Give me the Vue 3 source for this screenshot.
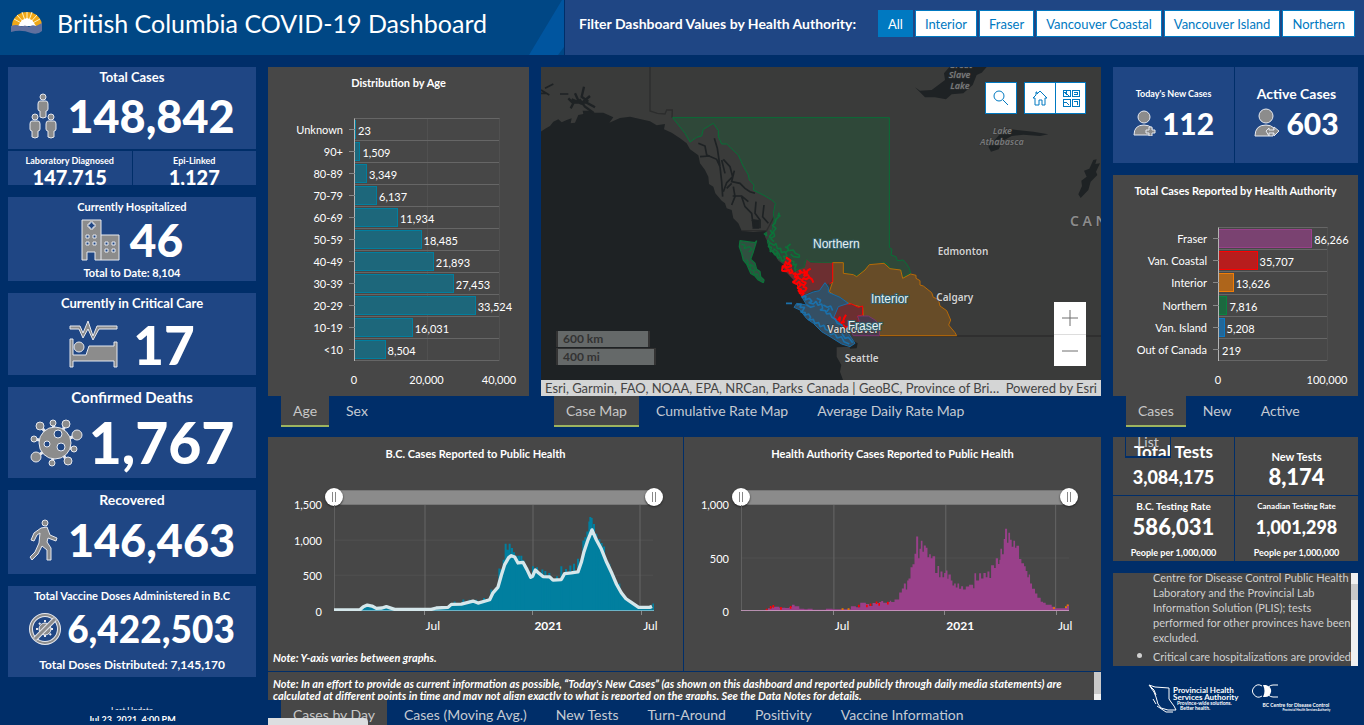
<script setup>
import { ref } from 'vue'

const authorities = ['All', 'Interior', 'Fraser', 'Vancouver Coastal', 'Vancouver Island', 'Northern']
const authority = ref('All')

const ages = [
  ['Unknown', '23'], ['90+', '1,509'], ['80-89', '3,349'], ['70-79', '6,137'],
  ['60-69', '11,934'], ['50-59', '18,485'], ['40-49', '21,893'], ['30-39', '27,453'],
  ['20-29', '33,524'], ['10-19', '16,031'], ['<10', '8,504']
]
const regions = [
  ['Fraser', '86,266', 'fraser'], ['Van. Coastal', '35,707', 'coastal'], ['Interior', '13,626', 'interior'],
  ['Northern', '7,816', 'northern'], ['Van. Island', '5,208', 'island'], ['Out of Canada', '219', 'out']
]
const share = (text, max) => (Number(text.replace(',', '')) / max) * 100 + '%'

const averageLine = '218,542 295,542 306,532 318,527 332,530 345,537 362,536 375,532 400,540 510,540 525,536 560,534 570,525 600,524 635,515 650,521 685,511 695,490 710,473 720,437 730,405 742,384 750,378 760,382 770,400 785,398 797,420 808,443 814,440 822,421 832,430 845,441 865,442 875,452 900,450 910,432 930,430 950,427 960,398 968,366 980,330 992,300 1005,330 1020,358 1036,398 1052,432 1066,465 1080,490 1094,508 1110,519 1132,534 1165,534 1172,531'
const spikes = [
  [580, 516], [606, 510], [625, 511], [645, 511], [668, 506], [690, 480], [714, 417], [720, 420], [727, 390], [733, 342],
  [739, 360], [745, 342], [752, 355], [758, 368], [766, 378], [773, 378], [780, 378], [786, 392], [815, 410], [827, 413],
  [843, 420], [852, 424], [864, 430], [887, 440], [900, 410], [914, 418], [927, 408], [938, 402], [950, 387], [966, 332],
  [972, 322], [978, 305], [984, 275], [987, 261], [991, 264], [998, 282], [1005, 312], [1014, 328], [1021, 340], [1028, 350],
  [1044, 402], [1056, 436], [1074, 462], [1176, 522]
]

const fraserSteps = [
  [258, 541], [266, 537], [278, 532], [286, 532], [300, 535], [318, 536], [330, 533], [338, 526], [346, 531], [360, 538],
  [375, 540], [385, 538], [400, 541], [440, 538], [460, 540], [515, 531], [530, 534], [543, 520], [560, 524], [570, 530],
  [580, 521], [600, 518], [606, 515], [612, 520], [624, 518], [632, 514], [636, 518], [646, 510], [660, 489], [668, 477],
  [674, 462], [680, 480], [684, 453], [688, 447], [694, 413], [700, 404], [706, 372], [711, 320], [717, 386], [721, 357],
  [725, 333], [730, 366], [734, 347], [740, 354], [745, 383], [750, 374], [755, 386], [760, 380], [768, 430], [775, 409],
  [780, 443], [784, 426], [790, 443], [795, 430], [800, 423], [805, 448], [808, 435], [815, 453], [820, 468], [825, 462],
  [830, 474], [835, 462], [840, 478], [846, 470], [852, 480], [860, 471], [870, 466], [882, 476], [886, 431], [891, 453],
  [900, 431], [906, 447], [913, 430], [920, 443], [925, 426], [931, 445], [936, 407], [945, 415], [950, 386], [957, 403],
  [961, 390], [964, 357], [969, 374], [974, 328], [978, 297], [984, 339], [988, 309], [993, 330], [998, 351], [1003, 333],
  [1008, 354], [1012, 348], [1020, 388], [1027, 401], [1035, 410], [1040, 424], [1045, 443], [1049, 435], [1053, 462],
  [1059, 478], [1068, 492], [1075, 505], [1085, 517], [1092, 520], [1100, 526], [1118, 532], [1128, 537], [1158, 534],
  [1164, 526]
]
const fraserPath = 'M258 545' + fraserSteps.map(([x, y]) => `H${x}V${y}`).join('') + 'H1170V545Z'
const coastalMarks = [[262, 538], [274, 530], [282, 527], [305, 533], [334, 530], [539, 526], [563, 526], [574, 522], [592, 516], [600, 521], [626, 517]]
const interiorMarks = [[490, 537], [508, 537], [1125, 534], [1161, 531], [1166, 525]]

const dailyTabs = ['Cases by Day', 'Cases (Moving Avg.)', 'New Tests', 'Turn-Around', 'Positivity', 'Vaccine Information']
</script>

<template>
  <div class="dashboard">
    <header class="top">
      <div class="brand">
        <svg class="sun" viewBox="0 0 32 24" aria-hidden="true">
          <path d="M1 15A15 14 0 0 1 31 15Z" fill="#f0a818" />
          <g stroke="#fff3c4" stroke-width="1"><path d="M16 15L3 8M16 15L6 4M16 15L11 1M16 15V1M16 15L21 1M16 15L26 4M16 15L29 8" /></g>
          <path d="M7 15L11 9L16 7L21 9L25 15Z" fill="#fff" />
          <path d="M0 15Q5 13 9 15Q12 16 14 14L18 16Q21 13 25 15L31 12V20Q27 24 20 22Q10 18 0 21Z" fill="#60709e" />
          <path d="M10 14L13 12L16 14L18 12L21 14L17 15Z" fill="#fff" />
        </svg>
        <h1>British Columbia COVID-19 Dashboard</h1>
        <svg class="wedge" viewBox="0 0 35 55" preserveAspectRatio="none" aria-hidden="true">
          <path d="M33 0H35V47L29 55H0Z" fill="#00559f" />
        </svg>
      </div>
      <div class="filter">
        <span id="filter-label" class="filter-label">Filter Dashboard Values by Health Authority:</span>
        <div class="options" role="group" aria-labelledby="filter-label">
          <button v-for="name in authorities" :key="name" type="button" :class="{ on: authority === name }" :aria-pressed="authority === name" @click="authority = name">{{ name }}</button>
        </div>
      </div>
    </header>

    <main class="board">
      <section class="left">
        <div class="total">
          <article class="card">
            <h2 class="t13">Total Cases</h2>
            <div class="figure raised">
              <svg width="28" height="46" viewBox="0 0 28 46" class="icon" aria-hidden="true">
                <g id="person"><circle cx="14" cy="4" r="3" /><path d="M11 8H17Q19 8 19 11V16Q19 18 17 18V24Q14 26 11 24V18Q9 18 9 16V11Q9 8 11 8Z" /></g>
                <use href="#person" x="-8" y="20" /><use href="#person" x="8" y="20" />
              </svg>
              <strong class="n45">148,842</strong>
            </div>
          </article>
          <article class="card sub"><h3 class="t9">Laboratory Diagnosed</h3><strong class="n20">147,715</strong></article>
          <article class="card sub"><h3 class="t9">Epi-Linked</h3><strong class="n20">1,127</strong></article>
        </div>

        <article class="card">
          <h2 class="t11">Currently Hospitalized</h2>
          <div class="figure">
            <svg width="39" height="42" viewBox="0 0 39 42" class="icon" aria-hidden="true">
              <path d="M1 1H20V16H38V41H14V33H6V41H1Z" />
              <path d="M20 16V41" />
              <path d="M9 3H12V5H14V8H12V10H9V8H7V5H9Z" fill="#1f4684" />
              <g fill="#1f4684"><path d="M5 16h3v3h-3zM12 16h3v3h-3zM5 23h3v3h-3zM12 23h3v3h-3zM24 23h3v3h-3zM31 23h3v3h-3zM24 30h3v3h-3zM31 30h3v3h-3z" /></g>
            </svg>
            <strong class="n46">46</strong>
          </div>
          <p class="foot t11">Total to Date: 8,104</p>
        </article>

        <article class="card">
          <h2 class="t13">Currently in Critical Care</h2>
          <div class="figure wide">
            <svg width="50" height="48" viewBox="0 0 50 48" class="icon" aria-hidden="true">
              <path d="M1 6H11L14 13L19 1L24 16L28 6H48V9H30L24 20L19 9L14 18L10 9H1Z" />
              <path d="M1 19H4V35H17L20 26H45V22H48V47H45V41H4V47H1Z" /><circle cx="10" cy="27" r="5" />
            </svg>
            <strong class="n53">17</strong>
          </div>
        </article>

        <article class="card">
          <h2 class="t15">Confirmed Deaths</h2>
          <div class="figure tight">
            <svg width="53" height="48" viewBox="0 0 53 48" class="icon" aria-hidden="true">
              <path d="M26 24L10 7M26 24L23 4M26 24L36 5M26 24L48 16M26 24L4 20M26 24L6 38M26 24L22 44M26 24L37 42M26 24L43 30" class="arm" />
              <circle cx="25" cy="24" r="16" /><circle cx="10" cy="7" r="4" /><circle cx="23" cy="4" r="3" /><circle cx="36" cy="5" r="4" />
              <circle cx="47" cy="16" r="5" /><circle cx="4" cy="20" r="3" /><circle cx="6" cy="38" r="5" /><circle cx="22" cy="44" r="3" /><circle cx="38" cy="42" r="4" /><circle cx="44" cy="30" r="3" />
              <g fill="#1f4684"><circle cx="28" cy="15" r="4" /><circle cx="17" cy="25" r="3" /><circle cx="31" cy="28" r="4" /></g>
            </svg>
            <strong class="n57">1,767</strong>
          </div>
        </article>

        <article class="card">
          <h2 class="t14">Recovered</h2>
          <div class="figure raised">
            <svg width="29" height="42" viewBox="0 0 29 42" class="icon" aria-hidden="true">
              <circle cx="16" cy="4" r="3" />
              <path d="M12 9L18 8L21 16L28 19L27 22L19 19L18 23L22 29V41H18V31L13 27L9 35L3 41L1 38L6 33L10 24L11 14L8 16L5 22L2 21L5 14Z" />
            </svg>
            <strong class="n45">146,463</strong>
          </div>
        </article>

        <article class="card">
          <h2 class="t11">Total Vaccine Doses Administered in B.C</h2>
          <div class="figure tight raised">
            <svg width="32" height="32" viewBox="0 0 32 32" class="icon" aria-hidden="true">
              <circle cx="16" cy="16" r="14" fill="none" stroke-width="4" /><circle cx="16" cy="16" r="14" fill="none" stroke="#8c8c8c" stroke-width="2" />
              <path d="M16 7V25M7 16H25M10 10L22 22M22 10L10 22" stroke-width="2" stroke-dasharray="2 1" />
              <circle cx="16" cy="16" r="6" /><path d="M6 26L26 6" stroke-width="5" /><path d="M6 26L26 6" stroke="#8c8c8c" stroke-width="3" />
            </svg>
            <strong class="n37">6,422,503</strong>
          </div>
          <p class="foot t12">Total Doses Distributed: 7,145,170</p>
        </article>

        <div class="updated"><span>Last Update</span><b>Jul 23, 2021, 4:00 PM</b></div>
      </section>

      <section class="age">
        <article class="panel">
          <h2>Distribution by Age</h2>
          <div class="bars age-bars">
            <div v-for="[label, count] in ages" :key="label" class="bar-row">
              <span class="bar-label">{{ label }}</span>
              <span class="bar" :style="{ width: share(count, 40000) }"></span>
              <span class="bar-count">{{ count }}</span>
            </div>
            <div class="scale"><span>0</span><span>20,000</span><span>40,000</span></div>
          </div>
        </article>
        <nav class="tabs"><button class="on" type="button">Age</button><button type="button">Sex</button></nav>
      </section>

      <section class="map">
        <article class="panel">
          <svg class="canvas" viewBox="3 21 1680 939" preserveAspectRatio="xMidYMid slice" role="img" aria-label="Case map">
            <rect x="3" y="21" width="1680" height="939" fill="#3a3b3a" />
            <path fill="#1e2224" d="M0 216L18 205L30 198L40 185L55 178L65 187L80 180L95 175L92 190L105 188L115 165L130 162L128 152L150 152L165 158L190 158L220 172L208 188L240 174L270 170L300 177L330 184L350 196L375 192L372 208L395 218L420 235L440 250L450 268L475 286L480 310L495 330L505 350L507 372L520 380L526 400L545 422L555 430L560 445L575 450L580 475L595 490L605 512L640 516L680 512L675 530L690 560L715 602L740 620L760 640L770 670L785 710L885 800L930 860L890 862L890 890L904 915L900 935L909 960H0Z" />
            <g fill="none" stroke="#1e2224" stroke-width="5">
              <path d="M85 115L100 130L92 145M105 100L118 128L95 118M132 80L125 110L145 125M100 128H140L165 142M118 118L135 140L160 158M150 108L122 132" stroke-width="7" />
              <path d="M3 90L28 105M15 85L40 72M3 100H20M60 102H85" />
              <path d="M475 250L495 258L500 285L530 298L540 320L545 365L548 410M523 235L532 265L540 320M550 298L570 320L578 350L560 368L550 395M545 300L555 340M583 332L575 365L600 370L615 385L630 395L645 400M560 385L575 370M578 408H605L625 425M580 380L585 410L575 435M605 410L615 440L635 460L640 500M648 425L645 460L660 480V505M672 435L668 470L685 490M635 480L650 490M480 290L510 288" />
              <path d="M642 480L655 482V504H640Z" fill="#1e2224" />
            </g>
            <path fill="none" stroke="#2c2d2d" stroke-width="4" d="M330 21V153L352 160L375 162L380 150H397L396 173M605 512H680L705 465M1018 828H1683" />
            <g fill="#1e2224">
              <path d="M1125 82L1140 92L1175 90L1215 60L1212 40L1228 21H1340L1325 38L1310 45L1298 75L1270 100L1235 103L1218 118L1185 112L1155 112Z" />
              <path d="M1345 260L1370 233L1395 205L1430 210L1480 215L1525 223L1500 228L1450 224L1415 228L1388 243L1376 268L1353 275Z" />
              <path d="M1660 300L1670 298L1666 312L1680 310L1668 335L1672 345L1652 365L1645 390L1622 414L1615 403L1626 378L1624 362L1640 350L1632 332L1648 326Z" />
              <path d="M925 835L953 850L950 865L930 866Z" />
            </g>
            <path fill="#2f4839" stroke="#086f36" stroke-width="3" d="M398 173H1048V562L1056 568L1053 585L1068 590L1072 602L1090 600L1100 612L1108 625L1112 640L1095 648L1088 655L1082 630L1050 626L1042 612L1032 608L1010 616L988 614L975 630L950 648L940 644L910 640V608L878 607L845 608L810 605L800 598L795 610V622L770 630L758 605L745 600L735 608L720 600L705 585L690 570L682 545L695 518L703 480L700 460L706 430L695 420L675 408L640 390L642 375L628 360L625 345L608 315L595 285L570 262L560 252H545L535 230V212L520 190L490 208L485 228L470 232L450 246L435 220Z" />
            <g stroke="#0d7139" stroke-width="4" fill="none" stroke-linejoin="bevel">
              <path stroke-width="5" d="M716 458L718 468L708 478L705 490L697 496L708 505L700 515L704 528L692 536L702 545M712 466L722 468M690 510L697 520L688 530L697 535M682 540L690 548L685 560L695 562L690 575L700 572L704 585L710 578L714 595L722 590L726 604L735 598L730 588L740 590M692 550L702 556L708 550L712 566L722 565L724 578L735 575L742 590M700 566L712 574L720 588M735 580L745 570L742 560L752 552M745 572L760 570L766 580L778 585V592L760 590L752 582M735 560L746 566M672 520L680 528L678 516M750 600L762 605L758 615L770 612L764 625L768 638" />
              <path d="M600 542L645 548L650 542L640 575L632 598L645 610L650 628L660 635L662 650L672 660L670 668L655 660L645 648L632 640L620 612L610 600L605 580L598 560Z" fill="#305040" /><path d="M604 552L615 556L612 566L628 560L636 568L626 576M618 598L625 606L622 614L634 618L630 628L640 632L642 644L652 642L658 656L665 660M630 612L640 618L646 634" />
            </g>
            <path fill="#674c28" stroke="#b96a06" stroke-width="3" d="M878 608H910V640L940 644L950 650L975 630L988 614L1032 610L1050 626L1082 630L1088 655L1112 642L1128 646V655L1140 662V675L1150 678L1175 698L1180 712L1195 718L1200 738L1220 752L1232 780L1226 795L1245 818L1250 827H1018V805L1008 785L970 768L968 742L940 735L905 722L868 695L878 665Z" />
            <path fill="#6c2f31" d="M728 625L738 592L753 602L758 640L775 630L795 622L800 598L812 608H878V665L862 672L850 690H820L785 710L770 670Z" />
            <path fill="none" stroke="#ff0000" stroke-width="3" d="M878 608V665L868 672M785 710L770 670" />
            <path fill="#6c2f31" stroke="#ff0000" stroke-width="3" d="M890 742L903 732H935L955 742L968 738V765L953 768L960 790L940 800H910L880 775Z" />
            <path fill="none" stroke="#ff0000" stroke-width="6" stroke-linejoin="bevel" d="M738 592L752 602L745 610L755 618L742 622L728 618L726 632L738 634L746 628L750 640L758 636L752 626M735 604L745 615M733 610L740 628M758 642L768 640L764 652L776 650L766 662L758 666L770 672L778 664L782 676L772 684L784 688L778 700L792 698L786 710M770 645L782 640L778 630L786 638L796 636L792 648L804 645L808 652L798 658L790 654L786 664L798 668L792 676L782 672M800 645L802 632L812 626M808 652L816 658L820 668M798 638L790 628M775 654L785 660M788 680L800 684L796 692L784 694M774 690L784 702M880 772L890 780L886 790L898 788L900 798L912 796L916 804L926 800M895 780L900 770L898 785M908 790L912 775L918 764M902 792L908 784L914 788M884 782L892 795" />
            <path fill="#493b4c" stroke="#7b346e" stroke-width="3" d="M953 768H985L1008 782L1018 802V827H940L930 805L948 800L960 790Z" />
            <path fill="#344f64" stroke="#176ca8" stroke-width="3" d="M785 710L820 696L838 692L855 668L865 682V697L900 712L925 730L895 740L880 775L900 790L925 820L945 850L930 860L905 852L870 830L845 815L820 790L800 776L780 750L762 742L770 730L800 735Z" />
            <path fill="none" stroke="#1b70aa" stroke-width="5" stroke-linejoin="bevel" d="M785 712L798 708L795 720L808 715L816 724L806 728L820 732L828 724L834 736L845 732L848 745L840 750L856 752L860 762L870 760L876 772L886 778L892 790L905 795L912 808L922 820M830 715L842 720L838 730M770 735L784 732L780 742L794 742L788 752L782 756L796 758L794 766L806 762L812 772L806 780L820 778L824 790L836 788L840 800L852 796L856 808L866 812L872 824L884 820L892 834L904 830L912 845L928 852M850 735L862 742L872 738L878 752M860 755L868 745M738 730H756M800 735L812 742L824 738M905 820L915 835L925 832L938 848" />
            <g class="city">
              <text x="819" y="563" class="zone">Northern</text><text x="993" y="729" class="zone">Interior</text>
              <text x="1193" y="585">Edmonton</text><text x="1189" y="724">Calgary</text><text x="862" y="818">Vancouver</text><text x="914" y="905">Seattle</text>
              <text x="923" y="809" class="zone">Fraser</text>
              <g class="lake"><text x="1228" y="24">Great</text><text x="1226" y="55">Slave</text><text x="1231" y="87">Lake</text><text x="1358" y="223">Lake</text><text x="1320" y="255">Athabasca</text></g>
              <text x="1590" y="498" class="country">C A N</text>
            </g>
          </svg>
          <div class="rulers"><span>600 km</span><span>400 mi</span></div>
          <div class="map-tools">
            <button type="button" aria-label="Search"><svg width="16" height="16" viewBox="0 0 16 16"><circle cx="6" cy="6" r="5" /><path d="M10 10L15 15" /></svg></button>
            <div class="pair">
              <button type="button" aria-label="Default view"><svg width="16" height="16" viewBox="0 0 16 16"><path d="M1 8L4 5V2H5V4L8 1L15 8H13V15H10V10H7V15H3V8Z" /></svg></button>
              <button type="button" aria-label="Basemaps"><svg width="18" height="18" viewBox="0 0 18 18" shape-rendering="crispEdges"><path d="M1 1H8V7H1ZM10 1H17V7H10ZM1 10H8V17H1ZM10 10H17V17H10ZM1 2L7 7M5 2L3 5M12 3H15V5H12M1 13H4L7 16M12 12H15V16" /></svg></button>
            </div>
          </div>
          <div class="zoom">
            <button type="button" aria-label="Zoom in"><svg width="16" height="16" viewBox="0 0 16 16"><path d="M8 0V16M0 8H16" /></svg></button>
            <button type="button" aria-label="Zoom out"><svg width="16" height="16" viewBox="0 0 16 16"><path d="M0 8H16" /></svg></button>
          </div>
          <div class="credits"><span>Esri, Garmin, FAO, NOAA, EPA, NRCan, Parks Canada | GeoBC, Province of British Columbia</span><span class="powered">Powered by Esri</span></div>
        </article>
        <nav class="tabs"><button class="on" type="button">Case Map</button><button type="button">Cumulative Rate Map</button><button type="button">Average Daily Rate Map</button></nav>
      </section>

      <section class="daily">
        <div class="daily-charts">
          <article class="panel trend">
            <h2>B.C. Cases Reported to Public Health</h2>
            <div class="time bc">
              <div class="range"><input type="range" aria-label="Start date" value="0"><input type="range" aria-label="End date" value="100"></div>
              <div class="plot">
                <svg viewBox="218 225 960 320" preserveAspectRatio="none" aria-hidden="true">
                  <path d="M218 331H1175M218 437H1175" stroke="#505050" stroke-width="3" /><path d="M219 225V545M491 225V545M815 225V545M1136 225V545" stroke="#666" stroke-width="3" />
                  <polygon :points="averageLine + ' 1172,545 218,545'" fill="#017f9f" />
                  <path :d="spikes.map(([x, y]) => `M${x} 545V${y}`).join('')" stroke="#017f9f" stroke-width="6" />
                  <path d="M218 544H1178" stroke="#7fbfcf" stroke-width="3" />
                  <polyline :points="averageLine" fill="none" stroke="#d5e7eb" stroke-width="10" stroke-linejoin="round" />
                </svg>
                <div class="ylabels"><span>1,500</span><span>1,000</span><span>500</span><span>0</span></div>
                <div class="xlabels"><span class="x1">Jul</span><b class="x2">2021</b><span class="x3">Jul</span></div>
              </div>
            </div>
            <p class="axis-note">Note: Y-axis varies between graphs.</p>
          </article>
          <article class="panel trend">
            <h2>Health Authority Cases Reported to Public Health</h2>
            <div class="time ha">
              <div class="range"><input type="range" aria-label="Start date" value="0"><input type="range" aria-label="End date" value="100"></div>
              <div class="plot">
                <svg viewBox="185 225 985 320" preserveAspectRatio="none" aria-hidden="true">
                  <path d="M185 385H1170" stroke="#505050" stroke-width="3" /><path d="M186 225V545M464 225V545M800 225V545M1130 225V545" stroke="#666" stroke-width="3" />
                  <path :d="fraserPath" fill="#99408a" />
                  <path :d="coastalMarks.map(([x, y]) => `M${x} ${y}v8`).join('')" stroke="#ff0000" stroke-width="5" />
                  <path :d="interiorMarks.map(([x, y]) => `M${x} ${y}v5`).join('')" stroke="#e67800" stroke-width="6" />
                  <path d="M185 544H1170" stroke="#cc9fc4" stroke-width="3" />
                </svg>
                <div class="ylabels"><span>1,000</span><span>500</span><span>0</span></div>
                <div class="xlabels"><span class="x1">Jul</span><b class="x2">2021</b><span class="x3">Jul</span></div>
              </div>
            </div>
          </article>
        </div>
        <div class="panel statement">
          <p>Note: In an effort to provide as current information as possible, “Today's New Cases” (as shown on this dashboard and reported publicly through daily media statements) are calculated at different points in time and may not align exactly to what is reported on the graphs. See the Data Notes for details.</p>
          <i class="scroll"></i>
        </div>
        <nav class="tabs"><button v-for="(tab, i) in dailyTabs" :key="tab" type="button" :class="{ on: i === 0 }">{{ tab }}</button></nav>
        <span class="status"></span>
      </section>

      <section class="right">
        <div class="pair-cards">
          <article class="card"><h3 class="t9">Today's New Cases</h3>
            <div class="figure tight"><svg width="23" height="26" viewBox="0 0 23 26" class="icon" aria-hidden="true"><circle cx="11" cy="7" r="6" /><path d="M1 25Q1 15 11 15Q16 15 19 18L18 25Z" /><path d="M16 17H19V20H22V23H19V26H16V23H13V20H16Z" /></svg><strong class="n30">112</strong></div>
          </article>
          <article class="card"><h3 class="t14">Active Cases</h3>
            <div class="figure tight"><svg width="26" height="29" viewBox="0 0 26 29" class="icon" aria-hidden="true"><circle cx="12" cy="8" r="7" /><path d="M1 28Q1 17 12 17Q17 17 20 20L19 28Z" /><path d="M15 20V22H20V19L25 23L20 28V25H15V28L12 23Z" /></svg><strong class="n30">603</strong></div>
          </article>
        </div>
        <article class="panel">
          <h2>Total Cases Reported by Health Authority</h2>
          <div class="bars region-bars">
            <div v-for="[label, count, key] in regions" :key="label" class="bar-row">
              <span class="bar-label">{{ label }}</span>
              <span class="bar" :class="key" :style="{ width: share(count, 100000) }"></span>
              <span class="bar-count">{{ count }}</span>
            </div>
            <div class="scale"><span>0</span><span>100,000</span></div>
          </div>
        </article>
        <nav class="tabs"><button class="on" type="button">Cases</button><button type="button">New</button><button type="button">Active</button><button class="wrapped" type="button">List</button></nav>
        <div class="tests">
          <article class="panel"><h3 class="t17">Total Tests</h3><strong class="n18">3,084,175</strong></article>
          <article class="panel"><h3 class="t11">New Tests</h3><strong class="n22">8,174</strong></article>
          <article class="panel"><h3 class="t10">B.C. Testing Rate</h3><strong class="n22">586,031</strong><small>People per 1,000,000</small></article>
          <article class="panel"><h3 class="t8">Canadian Testing Rate</h3><strong class="n18">1,001,298</strong><small>People per 1,000,000</small></article>
        </div>
        <div class="panel notes">
          <ul>
            <li>Centre for Disease Control Public Health Laboratory and the Provincial Lab Information Solution (PLIS); tests performed for other provinces have been excluded.</li>
            <li>Critical care hospitalizations are provided</li>
          </ul>
          <i class="scroll"></i>
        </div>
        <footer class="logos">
          <div class="phsa">
            <svg width="29" height="29" viewBox="0 0 29 29" aria-hidden="true"><path d="M1 1L7 3L21 4V15L23 18L26 22L28 26L20 26L13 24L10 20L8 13L6 8ZM5 15L8 20M9 22L18 28L25 28M2 2L6 6L8 11" fill="none" stroke="#fff" stroke-width="1" /></svg>
            <p><b>Provincial Health<br>Services Authority</b><span>Province-wide solutions.</span><span class="second">Better health.</span></p>
          </div>
          <div class="cdc">
            <svg width="27" height="14" viewBox="0 0 27 14" aria-hidden="true"><path d="M11 2A6 6 0 1 0 11 12M27 1H22A6 6 0 0 0 22 13H27" fill="none" stroke="#fff" stroke-width="1" /><path d="M12 1H15Q21 3 20 8Q19 13 14 13H12Q15 7 12 1Z" fill="#fff" /></svg>
            <b>BC Centre for Disease Control</b><span>Provincial Health Services Authority</span>
          </div>
        </footer>
      </section>
    </main>
  </div>
</template>

<style>
body { margin: 0; background: #002e69; }
</style>

<style scoped>
* { box-sizing: border-box; }
.dashboard { height: 100vh; min-height: 640px; display: flex; flex-direction: column; overflow: hidden; background: #002e69; color: #fff; font-family: Lato, "Open Sans", sans-serif; }
h1, h2, h3, p, ul { margin: 0; padding: 0; }
button { font-family: inherit; cursor: pointer; }
.top { flex: none; height: 55px; display: grid; grid-template-columns: minmax(0, 565fr) minmax(0, 799fr); }
.brand { position: relative; display: flex; align-items: center; gap: 14px; padding: 0 0 10px 11px; background: #004785; border-right: 1px solid #002e69; }
.sun { width: 32px; height: 24px; }
h1 { font-size: 25px; line-height: 32px; font-weight: 400; white-space: nowrap; }
.wedge { position: absolute; right: 0; top: 0; width: 35px; height: 100%; }
.filter { display: flex; align-items: flex-start; justify-content: space-between; padding: 10px 9px 0 14px; background: #1f4684; white-space: nowrap; }
.filter-label { font-size: 14px; line-height: 27px; font-weight: 700; }
.options { display: flex; gap: 2px; }
.options button { height: 27px; padding: 0 9px; font-size: 13px; color: #0079c1; background: #fff; border: 1px solid #0079c1; }
.options .on { color: #fff; background: #0079c1; }

.board { flex: 1; min-height: 0; display: grid; grid-template-columns: minmax(0, 248fr) minmax(0, 261fr) minmax(0, 560fr) minmax(0, 245fr); grid-template-rows: minmax(0, 360fr) minmax(0, 288fr); gap: 10px 12px; padding: 12px 6px 0 8px; }
.card { background: #1f4684; display: flex; flex-direction: column; align-items: center; overflow: hidden; min-width: 0; }
.panel { background: #474747; position: relative; min-width: 0; }
.left { grid-row: 1 / 3; display: grid; gap: 12px; grid-template-rows: minmax(0, 118fr) minmax(0, 84fr) minmax(0, 82fr) minmax(0, 91fr) minmax(0, 84fr) minmax(0, 91fr) minmax(0, 36fr); min-height: 0; }
.total { display: grid; gap: 2px 1px; grid-template-columns: 1fr 1fr; grid-template-rows: minmax(0, 82fr) minmax(0, 34fr); }
.total .card:first-child { grid-column: 1 / 3; }
.card h2 { line-height: 20px; font-weight: 700; white-space: nowrap; }
h3 { font-weight: 700; white-space: nowrap; }
.sub { padding-top: 3px; }
.sub h3 { line-height: 13px; }
.figure { flex: 1; display: flex; align-items: center; justify-content: center; gap: 10px; }
.figure.tight { gap: 6px; }
.figure.wide { gap: 14px; }
.figure.raised { padding-bottom: 4px; }
strong { line-height: 1; font-weight: 900; }
.foot { line-height: 20px; padding-bottom: 2px; font-weight: 700; flex: none; }
.icon { fill: #8c8c8c; stroke: #e6e9f0; stroke-width: 1; flex: none; }
.arm { stroke-width: 3; }
.t8 { font-size: 8px; } .t9 { font-size: 9px; } .t10 { font-size: 10px; } .t11 { font-size: 11px; } .t12 { font-size: 12px; }
.t13 { font-size: 13px; } .t14 { font-size: 14px; } .t15 { font-size: 15px; } .t17 { font-size: 17px; }
.n18 { font-size: 18px; } .n20 { font-size: 20px; } .n22 { font-size: 22px; } .n30 { font-size: 30px; }
.n37 { font-size: 37px; } .n45 { font-size: 45px; } .n46 { font-size: 46px; } .n53 { font-size: 53px; } .n57 { font-size: 57px; }
.updated { display: flex; flex-direction: column; align-items: center; padding-top: 17px; gap: 6px; }
.updated span, .updated b { display: block; overflow: hidden; font-size: 8px; line-height: 8px; height: 4px; }
.updated b { font-size: 9px; height: 5px; }

.age, .map { display: grid; grid-template-rows: minmax(0, 1fr) 31px; min-height: 0; }
.age .panel, .right > .panel, .trend { display: flex; flex-direction: column; }
.panel h2 { font-size: 11px; line-height: 32px; font-weight: 700; text-align: center; white-space: nowrap; }
.bars { flex: 1; display: flex; flex-direction: column; position: relative; margin: 19px 29px 35px 86px; border-left: 1px solid #b5b5b5; border-top: 1px solid #666; background: linear-gradient(#505050, #505050) 50% 0 / 1px 100% no-repeat; border-right: 1px solid #505050; font-size: 11px; }
.region-bars { margin: 20px 30px 35px 105px; background: none; }
.bar-row { flex: 1; position: relative; display: flex; align-items: center; border-bottom: 1px solid #666; white-space: nowrap; }
.bar-row::before { content: ""; position: absolute; left: -6px; width: 6px; height: 1px; background: #888; }
.bar-label { position: absolute; right: 100%; margin-right: 12px; }
.bar { flex: none; height: 19px; background: #1d677b; border: 1px solid #017f9f; border-left: 0; }
.bar-count { margin-left: 2px; padding-top: 2px; }
.fraser { background: #7a4271; border-color: #99408a; } .coastal { background: #b81d1d; border-color: #ff0000; }
.interior { background: #ae651b; border-color: #f07d08; } .northern { background: #1c683f; border-color: #078540; }
.island { background: #21679a; border-color: #0b79c4; } .out { border-color: transparent; background: none; }
.scale { position: absolute; top: 100%; left: -31px; right: -30px; display: flex; justify-content: space-between; padding-top: 12px; line-height: 14px; }
.scale span { width: 60px; text-align: center; }
.tabs { position: relative; display: flex; gap: 5px; padding-left: 13px; min-width: 0; }
.tabs button { flex: none; height: 31px; padding: 0 12px; border: 0; border-bottom: 2px solid transparent; background: none; color: #c5cad2; font-size: 14px; white-space: nowrap; }
.tabs .on { background: #474747; border-color: #9db45f; color: #c8c8c8; }

.canvas { position: absolute; inset: 0 0 16px; width: 100%; height: calc(100% - 16px); }
.city { font: 600 30px "Noto Sans", sans-serif; fill: #d2d2d2; paint-order: stroke; stroke: #333; stroke-width: 3px; }
.zone { font: 400 36px "Liberation Sans", sans-serif; fill: #e6f0f2; stroke: #315d68; stroke-width: 6px; }
.lake { font-size: 27px; font-style: italic; fill: #77797a; }
.country { font-size: 42px; fill: #8c8c8c; }
.rulers { position: absolute; left: 15px; bottom: 31px; display: grid; gap: 1px; color: #333; font-size: 12px; line-height: 16px; font-weight: 700; }
.rulers span { background: #656969; border: solid #333; border-width: 0 2px; padding-left: 5px; width: 94px; }
.rulers span + span { width: 100px; border-top: 1px solid #333; }
.map-tools { position: absolute; right: 15px; top: 15px; display: flex; gap: 7px; }
.map-tools button { width: 32px; height: 32px; padding: 0; background: #fff; border: 1px solid #0079c1; display: grid; place-items: center; }
.map-tools svg { fill: none; stroke: #0079c1; stroke-width: 1; }
.pair { display: flex; } .pair button + button { margin-left: -1px; width: 31px; }
.zoom { position: absolute; right: 15px; bottom: 30px; background: #fff; }
.zoom button { display: grid; place-items: center; width: 32px; height: 32px; padding: 0; border: 0; background: none; }
.zoom button + button { border-top: 1px solid #ddd; }
.zoom svg { stroke: #6e6e6e; stroke-width: 1; }
.credits { position: absolute; left: 0; right: 0; bottom: 0; height: 16px; display: flex; gap: 4px; background: #d4d5d5; color: #444; font-size: 13px; line-height: 16px; padding: 0 4px; white-space: nowrap; }
.credits span:first-child { flex: 1; overflow: hidden; text-overflow: ellipsis; }

.daily { grid-column: 2 / 4; grid-row: 2; position: relative; display: grid; grid-template-rows: minmax(0, 235fr) 28px 24px; gap: 1px 0; min-height: 0; }
.daily-charts { display: grid; grid-template-columns: minmax(0, 415fr) minmax(0, 417fr); gap: 1px; }
.trend h2 { line-height: 34px; }
.time { position: relative; margin: 19px 29px 0 66px; flex: 1; display: flex; flex-direction: column; font-size: 12px; }
.time.ha { margin: 19px 32px 60px 57px; }
.range { position: relative; height: 15px; background: #8b8b8b; border: solid #777; border-width: 1px 0; }
.range input { position: absolute; left: -9px; top: -3px; width: calc(100% + 18px); height: 18px; margin: 0; appearance: none; background: none; pointer-events: none; }
.range input::-webkit-slider-thumb { appearance: none; pointer-events: auto; width: 18px; height: 18px; border-radius: 50%; background: linear-gradient(90deg, transparent 7px, #888 7px 8px, transparent 8px 10px, #888 10px 11px, transparent 11px) 0 4px / 18px 10px no-repeat, #fff; box-shadow: 0 1px 2px #222; }
.plot { position: relative; flex: 1; min-height: 0; }
.plot svg { position: absolute; inset: 0; width: 100%; height: 100%; }
.ylabels { position: absolute; right: 100%; top: -8px; bottom: -8px; margin-right: 12px; display: flex; flex-direction: column; justify-content: space-between; text-align: right; font-size: 11px; line-height: 15px; }
.xlabels { position: absolute; top: 100%; left: 0; right: 0; height: 30px; }
.xlabels span, .xlabels b { position: absolute; top: 0; padding: 7px 0 0 2px; }
.xlabels span::before, .xlabels b::before { content: ""; position: absolute; left: 0; top: 0; width: 1px; height: 4px; background: #888; }
.x1 { left: 28%; } .x2 { left: 62%; } .x3 { left: 96%; }
.axis-note { height: 60px; padding: 40px 0 0 5px; font-size: 11px; line-height: 14px; font-style: italic; font-weight: 700; }
.statement { overflow: hidden; padding: 6px 24px 0 5px; font-size: 11px; line-height: 12px; font-style: italic; font-weight: 700; }
.scroll { position: absolute; right: 0; top: 0; width: 7px; height: 100%; background: linear-gradient(#c9c9c9 22px, #f0f0f0 22px); }
.daily .tabs { overflow: hidden; margin-top: -1px; }
.status { position: absolute; left: 0; bottom: 0; width: 100px; height: 7px; background: #dcdee0; border-radius: 0 4px 0 0; }

.right { grid-row: 1 / 3; grid-column: 4; display: grid; min-height: 0; grid-template-rows: minmax(0, 96fr) 12px minmax(0, 221fr) 31px 10px minmax(0, 124fr) 12px minmax(0, 93fr) minmax(0, 59fr); }
.pair-cards { display: grid; grid-template-columns: 121fr 123fr; gap: 1px; }
.pair-cards .card { padding-top: 17px; }
.pair-cards h3 { line-height: 20px; }
.pair-cards .figure { flex: none; height: 37px; }
.right > .panel:nth-child(2) { grid-row: 3; }
.right > .tabs { grid-row: 4; z-index: 1; }
.right > .tabs .wrapped { position: absolute; left: 12px; top: 31px; height: 31px; width: 46px; padding: 0; border: solid #002e69; border-width: 0 1px 2px; }
.tests { grid-row: 6; display: grid; grid-template-columns: 121fr 123fr; grid-template-rows: minmax(0, 58fr) minmax(0, 65fr); gap: 1px; }
.tests .panel { overflow: hidden; display: flex; flex-direction: column; align-items: center; padding: 2px 0; }
.tests .panel:first-child { padding-top: 6px; justify-content: flex-start; gap: 5px; }
.tests .panel:nth-child(2) { padding-top: 11px; }
.tests h3 { line-height: 17px; }
.tests strong { line-height: 24px; }
.tests small { margin-top: auto; font-size: 9px; line-height: 12px; font-weight: 700; }
.right > .notes { grid-row: 8; display: block; overflow: hidden; color: #d0d0d0; font-size: 11px; line-height: 15px; }
.notes ul { margin: -3px 7px 0 40px; list-style: none; }
.notes li { position: relative; }
.notes li + li { margin-top: 4px; white-space: nowrap; }
.notes li + li::before { content: ""; position: absolute; left: -16px; top: 4px; width: 5px; height: 5px; border-radius: 50%; background: #d0d0d0; }
.notes .scroll { background: linear-gradient(#f0f0f0 11px, #c9c9c9 11px 27px, #f0f0f0 27px); }
.logos { grid-row: 9; display: flex; gap: 13px; padding: 18px 0 0 35px; }
.phsa { display: flex; gap: 0; }
.phsa svg { margin-right: -4px; }
.phsa b { display: block; font-size: 8px; line-height: 7px; padding-top: 3px; }
.phsa p { white-space: nowrap; }
.phsa span { display: block; padding-left: 4px; font-size: 5px; line-height: 5px; font-weight: 700; }
.phsa .second { padding-left: 7px; }
.cdc { white-space: nowrap; }
.cdc svg { display: block; }
.cdc b, .cdc span { display: block; padding-left: 11px; font-size: 5px; line-height: 6px; margin-top: 4px; }
.cdc span { padding-left: 31px; font-size: 3px; line-height: 3px; margin-top: 1px; font-weight: 700; }
</style>
